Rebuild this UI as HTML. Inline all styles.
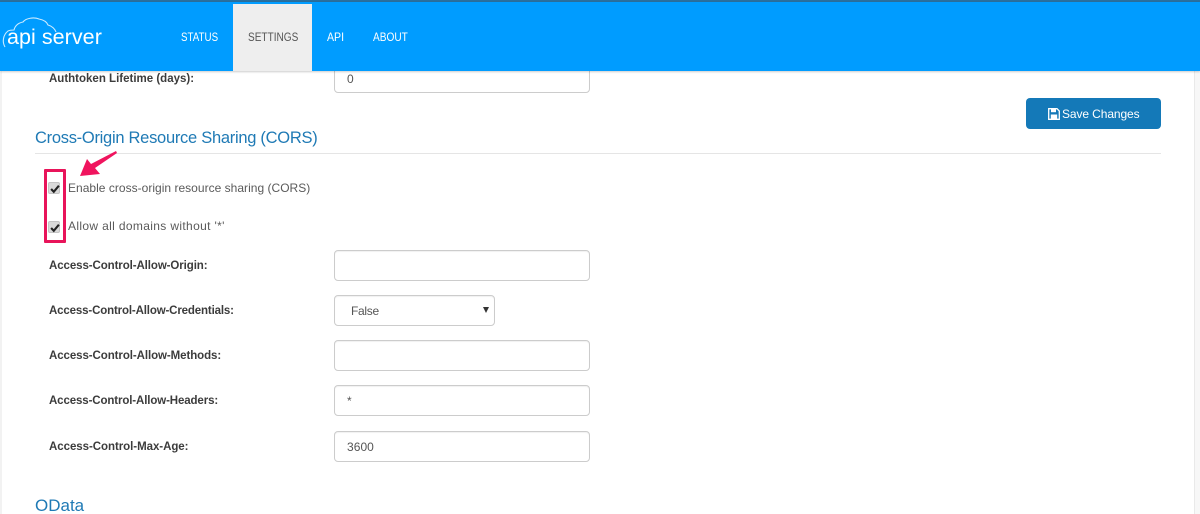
<!DOCTYPE html>
<html>
<head>
<meta charset="utf-8">
<style>
html,body{margin:0;padding:0;width:1200px;height:514px;overflow:hidden;background:#fff}
body{position:relative;font-family:"Liberation Sans",sans-serif;color:#555}
.a{position:absolute;white-space:nowrap}
.lb{font-weight:bold;font-size:11.5px;color:#3c3c3c;left:49px;line-height:14px}
.in{position:absolute;left:334px;width:254px;height:29px;border:1px solid #ccc;border-radius:4px;background:#fff;box-shadow:inset 0 1px 1px rgba(0,0,0,.06);font-size:12px;line-height:31px;color:#555;text-indent:12px;letter-spacing:.05px}
.nav{position:absolute;top:31px;font-size:11.5px;line-height:14px;color:#fff;transform-origin:left center;white-space:nowrap}
.cb{position:absolute;left:48px;width:10px;height:10px;border-radius:2px;background:#d9d9d9;border:1px solid #c4c4c4}
.cb svg{position:absolute;left:.5px;top:.5px}
.cl{font-size:12px;line-height:14px;color:#5a5a5a;left:68px}
h2{position:absolute;margin:0;font-weight:normal;font-size:16.5px;color:#1f7ab5;white-space:nowrap;line-height:20px}
</style>
</head>
<body>
<div class="a" style="left:0;top:71px;width:2px;height:443px;background:#f2f2f2"></div>
<div class="a" style="left:1194px;top:71px;width:1px;height:443px;background:#e9e9e9"></div>
<div class="a" style="left:1195px;top:71px;width:5px;height:443px;background:#f7f7f7"></div>

<div class="a lb" style="top:72px">Authtoken Lifetime (days):</div>
<div class="in" style="top:63px;height:28px;line-height:30px">0</div>

<div class="a" style="left:0;top:0;width:1200px;height:2px;background:#2a6f9e"></div>
<div class="a" style="left:0;top:2px;width:1200px;height:69px;background:#009cff;box-shadow:0 1px 2px rgba(0,0,0,.2)"></div>

<svg class="a" style="left:0;top:12px" width="62" height="40" viewBox="0 12 62 40" fill="none" stroke="#fff" stroke-width="1.1" stroke-opacity=".8">
<path d="M5 47C2 42 3 35 8 31C10 30 12 30 14 30C15 26 18 23 23 22C26 18 34 17 39 19C44 20 47 22 48 25C52 26 55 29 56 32"/>
</svg>
<div class="a" style="left:7px;top:22px;font-size:21.5px;line-height:30px;color:#fff;letter-spacing:.05px">api server</div>

<div class="a" style="left:233px;top:4px;width:79px;height:67px;background:#eee"></div>
<div class="nav" style="left:181px;transform:scaleX(.85)">STATUS</div>
<div class="nav" style="left:248px;color:#555;transform:scaleX(.875)">SETTINGS</div>
<div class="nav" style="left:327px;transform:scaleX(.92)">API</div>
<div class="nav" style="left:373px;transform:scaleX(.88)">ABOUT</div>

<div class="a" style="left:1026px;top:98px;width:135px;height:31px;background:#1479b8;border-radius:4px"></div>
<svg class="a" style="left:1048px;top:108px" width="12" height="12" viewBox="0 0 12 12">
<path d="M.7 .7H9L11.3 3V11.3H.7Z" fill="none" stroke="#fff" stroke-width="1.3"/>
<rect x="3" y="1" width="5" height="3.2" fill="#fff"/>
<rect x="2.8" y="6.5" width="6.4" height="4.5" fill="#fff"/>
</svg>
<div class="a" style="left:1062px;top:107px;font-size:12px;line-height:15px;color:#fff;letter-spacing:-.1px">Save Changes</div>

<h2 style="left:35px;top:128px;letter-spacing:-.28px">Cross-Origin Resource Sharing (CORS)</h2>
<div class="a" style="left:35px;top:153px;width:1126px;height:1px;background:#e5e5e5"></div>

<div class="cb" style="top:182px"><svg width="10" height="10" viewBox="0 0 9 9"><path d="M1 4.5L3.4 7L8 1.5" fill="none" stroke="#222" stroke-width="1.9"/></svg></div>
<div class="a cl" style="top:181px;letter-spacing:.02px">Enable cross-origin resource sharing (CORS)</div>
<div class="cb" style="top:221px"><svg width="10" height="10" viewBox="0 0 9 9"><path d="M1 4.5L3.4 7L8 1.5" fill="none" stroke="#222" stroke-width="1.9"/></svg></div>
<div class="a cl" style="top:219px;letter-spacing:.35px">Allow all domains without '*'</div>

<div class="a" style="left:44px;top:169px;width:16px;height:68px;border:3px solid #e8145a;border-radius:1px"></div>
<svg class="a" style="left:78px;top:150px" width="42" height="28" viewBox="0 0 42 28"><path d="M2 26L9 9L13 14L38 1L39 3L17 18L22 24Z" fill="#f0145e"/></svg>

<div class="a lb" style="top:259px;letter-spacing:-.09px">Access-Control-Allow-Origin:</div>
<div class="in" style="top:250px"></div>

<div class="a lb" style="top:304px;letter-spacing:-.15px">Access-Control-Allow-Credentials:</div>
<div class="in" style="top:295px;width:159px;text-indent:16px;letter-spacing:-.3px">False</div>
<div class="a" style="left:483px;top:307px;width:0;height:0;border-left:3px solid transparent;border-right:3px solid transparent;border-top:6px solid #333"></div>

<div class="a lb" style="top:349px;letter-spacing:-.08px">Access-Control-Allow-Methods:</div>
<div class="in" style="top:340px"></div>

<div class="a lb" style="top:394px;letter-spacing:-.12px">Access-Control-Allow-Headers:</div>
<div class="in" style="top:385px">*</div>

<div class="a lb" style="top:440px;letter-spacing:-.05px">Access-Control-Max-Age:</div>
<div class="in" style="top:431px">3600</div>

<h2 style="left:35px;top:496px;font-size:17px">OData</h2>
</body>
</html>
